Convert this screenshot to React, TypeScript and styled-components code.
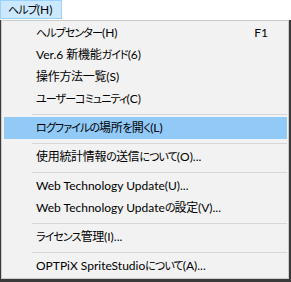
import React from "react";
import styled, { createGlobalStyle, css } from "styled-components";

const Global = createGlobalStyle`
  html, body {
    margin: 0;
    padding: 0;
    background: #3a3a3a;
    overflow: hidden;
  }
  body {
    font-family: "Lato", "Noto Sans CJK JP", sans-serif;
    font-size: 12px;
    font-feature-settings: "palt" 1;
    color: #000;
  }
`;

const Page = styled.div`
  width: 291px;
  height: 282px;
  display: flex;
  flex-direction: column;
`;

const MenuBar = styled.div`
  height: 20px;
  background: #ffffff;
  display: flex;
  align-items: flex-start;
`;

const MenuTitle = styled.div`
  box-sizing: border-box;
  width: 62px;
  height: 19px;
  padding-left: 7px;
  background: #cce8ff;
  border: 1px solid #99d1ff;
  display: flex;
  align-items: center;
  line-height: 1;
  white-space: nowrap;
`;

const Popup = styled.div`
  box-sizing: border-box;
  margin-left: 1px;
  width: 288px;
  border: 1px solid #cccccc;
  background: #f2f2f2;
  padding: 1px 1px 1px 2px;
  display: flex;
  flex-direction: column;
`;

const Item = styled.div<{ $active?: boolean }>`
  height: 22px;
  display: flex;
  align-items: center;
  padding: 0 19px 0 32px;
  background: ${(p) => (p.$active ? "#91c9f7" : "transparent")};
  white-space: nowrap;
  line-height: 1;
`;

const Label = styled.span`
  flex: 1;
`;

const Shortcut = styled.span`
  text-align: right;
`;

const Run = styled.span<{ $script: "kana" | "kanji" | "latin" }>`
  ${(p) =>
    p.$script === "kana"
      ? css`
          font-size: 11px;
          letter-spacing: -0.9px;
        `
      : p.$script === "kanji"
      ? css`
          letter-spacing: -0.3px;
        `
      : css``}
`;

const Separator = styled.div`
  height: 7px;
  display: flex;
  flex-direction: column;
  padding-left: 28px;
  &::after {
    content: "";
    margin-top: 4px;
    height: 1px;
    background: #d7d7d7;
  }
`;

function Text({ children }: { children: string }) {
  const parts =
    children.match(
      /([\u3040-\u30ff]+|[\u3400-\u9fff]+|[^\u3040-\u30ff\u3400-\u9fff]+)/g
    ) || [];
  return (
    <>
      {parts.map((s, i) => {
        const script = /[\u3040-\u30ff]/.test(s)
          ? "kana"
          : /[\u3400-\u9fff]/.test(s)
          ? "kanji"
          : "latin";
        return (
          <Run key={i} $script={script}>
            {s}
          </Run>
        );
      })}
    </>
  );
}

type Entry = { label: string; shortcut?: string; active?: boolean } | "sep";

const entries: Entry[] = [
  { label: "ヘルプセンター(H)", shortcut: "F1" },
  { label: "Ver.6 新機能ガイド(6)" },
  { label: "操作方法一覧(S)" },
  { label: "ユーザーコミュニティ(C)" },
  "sep",
  { label: "ログファイルの場所を開く(L)", active: true },
  "sep",
  { label: "使用統計情報の送信について(O)..." },
  "sep",
  { label: "Web Technology Update(U)..." },
  { label: "Web Technology Updateの設定(V)..." },
  "sep",
  { label: "ライセンス管理(I)..." },
  "sep",
  { label: "OPTPiX SpriteStudioについて(A)..." },
];

export default function App() {
  return (
    <>
      <Global />
      <Page>
        <MenuBar>
          <MenuTitle>
            <Text>ヘルプ(H)</Text>
          </MenuTitle>
        </MenuBar>
        <Popup>
          {entries.map((e, i) =>
            e === "sep" ? (
              <Separator key={i} />
            ) : (
              <Item key={i} $active={e.active}>
                <Label>
                  <Text>{e.label}</Text>
                </Label>
                {e.shortcut && <Shortcut>{e.shortcut}</Shortcut>}
              </Item>
            )
          )}
        </Popup>
      </Page>
    </>
  );
}
